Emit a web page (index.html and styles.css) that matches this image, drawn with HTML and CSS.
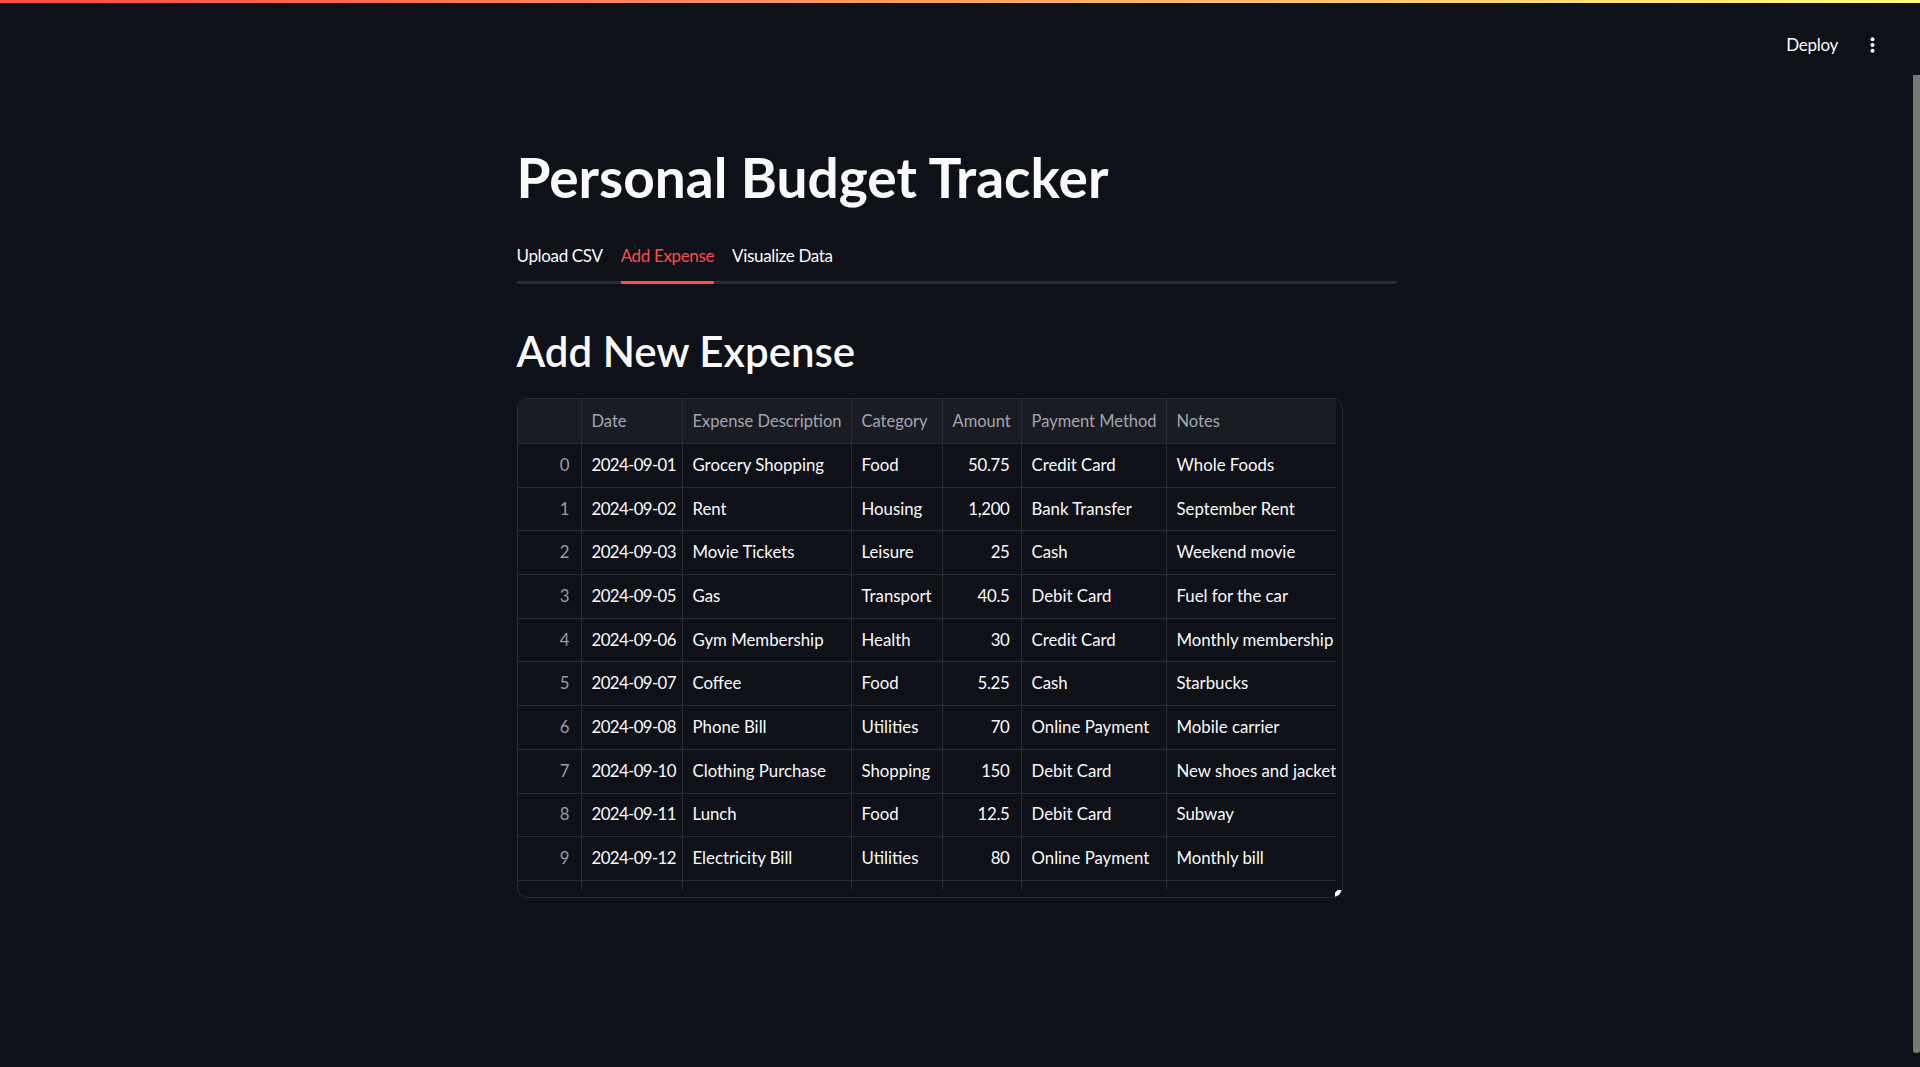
FILE: index.html
```html
<!DOCTYPE html>
<html lang="en">
<head>
<meta charset="utf-8">
<title>Personal Budget Tracker</title>
<link rel="stylesheet" href="styles.css">
</head>
<body>
<div class="decoration"></div>
<div class="shell">
  <div class="main">
    <div class="toolbar">
      <span class="deploy">Deploy</span>
      <svg class="menu" width="5" height="16" viewBox="0 0 5 16"><circle cx="2.5" cy="2.2" r="2" fill="#fafafa"/><circle cx="2.5" cy="8" r="2" fill="#fafafa"/><circle cx="2.5" cy="13.8" r="2" fill="#fafafa"/></svg>
    </div>
    <div class="content">
      <h1 class="title">Personal Budget Tracker</h1>
      <div class="tabs">
        <span class="tab">Upload CSV</span>
        <span class="tab active">Add Expense</span>
        <span class="tab">Visualize Data</span>
      </div>
      <h2 class="subtitle">Add New Expense</h2>
      <div class="df">
        <div class="grid">
          <div class="row head">
            <div class="c idx"></div><div class="c">Date</div><div class="c">Expense Description</div><div class="c">Category</div><div class="c">Amount</div><div class="c">Payment Method</div><div class="c last">Notes</div>
          </div>
          <div class="row"><div class="c idx">0</div><div class="c d">2024-09-01</div><div class="c">Grocery Shopping</div><div class="c">Food</div><div class="c num">50.75</div><div class="c">Credit Card</div><div class="c last">Whole Foods</div></div>
          <div class="row"><div class="c idx">1</div><div class="c d">2024-09-02</div><div class="c">Rent</div><div class="c">Housing</div><div class="c num">1,200</div><div class="c">Bank Transfer</div><div class="c last">September Rent</div></div>
          <div class="row"><div class="c idx">2</div><div class="c d">2024-09-03</div><div class="c">Movie Tickets</div><div class="c">Leisure</div><div class="c num">25</div><div class="c">Cash</div><div class="c last">Weekend movie</div></div>
          <div class="row"><div class="c idx">3</div><div class="c d">2024-09-05</div><div class="c">Gas</div><div class="c">Transport</div><div class="c num">40.5</div><div class="c">Debit Card</div><div class="c last">Fuel for the car</div></div>
          <div class="row"><div class="c idx">4</div><div class="c d">2024-09-06</div><div class="c">Gym Membership</div><div class="c">Health</div><div class="c num">30</div><div class="c">Credit Card</div><div class="c last">Monthly membership</div></div>
          <div class="row"><div class="c idx">5</div><div class="c d">2024-09-07</div><div class="c">Coffee</div><div class="c">Food</div><div class="c num">5.25</div><div class="c">Cash</div><div class="c last">Starbucks</div></div>
          <div class="row"><div class="c idx">6</div><div class="c d">2024-09-08</div><div class="c">Phone Bill</div><div class="c">Utilities</div><div class="c num">70</div><div class="c">Online Payment</div><div class="c last">Mobile carrier</div></div>
          <div class="row"><div class="c idx">7</div><div class="c d">2024-09-10</div><div class="c">Clothing Purchase</div><div class="c">Shopping</div><div class="c num">150</div><div class="c">Debit Card</div><div class="c last">New shoes and jacket</div></div>
          <div class="row"><div class="c idx">8</div><div class="c d">2024-09-11</div><div class="c">Lunch</div><div class="c">Food</div><div class="c num">12.5</div><div class="c">Debit Card</div><div class="c last">Subway</div></div>
          <div class="row"><div class="c idx">9</div><div class="c d">2024-09-12</div><div class="c">Electricity Bill</div><div class="c">Utilities</div><div class="c num">80</div><div class="c">Online Payment</div><div class="c last">Monthly bill</div></div>
          <div class="row"><div class="c idx"></div><div class="c"></div><div class="c"></div><div class="c"></div><div class="c num"></div><div class="c"></div><div class="c last"></div></div>
        </div>
        <div class="resize"></div>
      </div>
    </div>
  </div>
  <div class="track"><div class="thumb"></div></div>
</div>
</body>
</html>
```
FILE: styles.css
```css
html, body {
  margin: 0;
  padding: 0;
}
body {
  background: #0e1117;
  color: #fafafa;
  font-family: Lato, "Noto Sans", sans-serif;
  height: 1067px;
  overflow: hidden;
}
.decoration {
  height: 3px;
  background: linear-gradient(90deg, #ff4b4b, #fffd80);
}
.shell {
  display: flex;
  height: 1064px;
}
.main {
  flex: 1;
  min-width: 0;
}
.track {
  width: 7px;
  padding-top: 72px;
}
.thumb {
  height: 978px;
  background: #787878;
  border-radius: 0 0 3px 3px;
}
.toolbar {
  height: 84px;
  display: flex;
  align-items: center;
  justify-content: flex-end;
  gap: 32px;
  padding-right: 38px;
}
.deploy {
  font-size: 17px;
  letter-spacing: -0.3px;
  line-height: 24px;
  color: #fafafa;
}
.menu {
  display: block;
}
.content {
  width: 880px;
  margin: 0 auto;
  padding-top: 57px;
}
.title {
  margin: 0;
  font-size: 55px;
  line-height: 66px;
  font-weight: 700;
  color: #fafafa;
}
.tabs {
  margin-top: 34px;
  display: flex;
  gap: 18px;
  border-bottom: 3px solid #2a2c33;
}
.tab {
  font-size: 17px;
  letter-spacing: -0.35px;
  line-height: 24px;
  padding-bottom: 13px;
  border-bottom: 3px solid transparent;
  margin-bottom: -3px;
  color: #fafafa;
}
.tab.active {
  color: #ff4b4b;
  border-bottom-color: #ff4b4b;
}
.subtitle {
  margin: 42px 0 22px;
  font-size: 42px;
  line-height: 50px;
  font-weight: 600;
  color: #fafafa;
}
.df {
  position: relative;
  width: 826px;
  height: 500px;
  box-sizing: border-box;
  border: 1px solid #2a2c33;
  border-radius: 10px;
  overflow: hidden;
  padding: 0 6px 7px 0;
}
.grid {
  height: 491px;
  overflow: hidden;
}
.row {
  display: grid;
  grid-template-columns: 64px 101px 169px 91px 79px 145px 169px;
  height: 43.7px;
}
.row.head {
  height: 45px;
  background: #1a1c24;
}
.c {
  box-sizing: border-box;
  display: flex;
  align-items: center;
  padding: 0 10px 2px;
  border-right: 1px solid #2a2c33;
  border-bottom: 1px solid #2a2c33;
  font-size: 16.8px;
  white-space: nowrap;
  overflow: hidden;
  color: #fafafa;
}
.head .c {
  color: #a3a6ae;
  font-size: 16.5px;
  padding-bottom: 0;
}
.c.last {
  border-right: none;
}
.c.d {
  letter-spacing: -0.6px;
}
.c.idx, .c.num {
  justify-content: flex-end;
  padding-right: 11px;
}
.c.num {
  letter-spacing: -0.3px;
}
.c.idx {
  color: #9a9ca3;
}
.resize {
  position: absolute;
  right: 0;
  bottom: 0;
  width: 7px;
  height: 7px;
  background: #fafafa;
  clip-path: polygon(45% 0, 100% 0, 100% 100%, 0 100%, 0 45%);
}
```
